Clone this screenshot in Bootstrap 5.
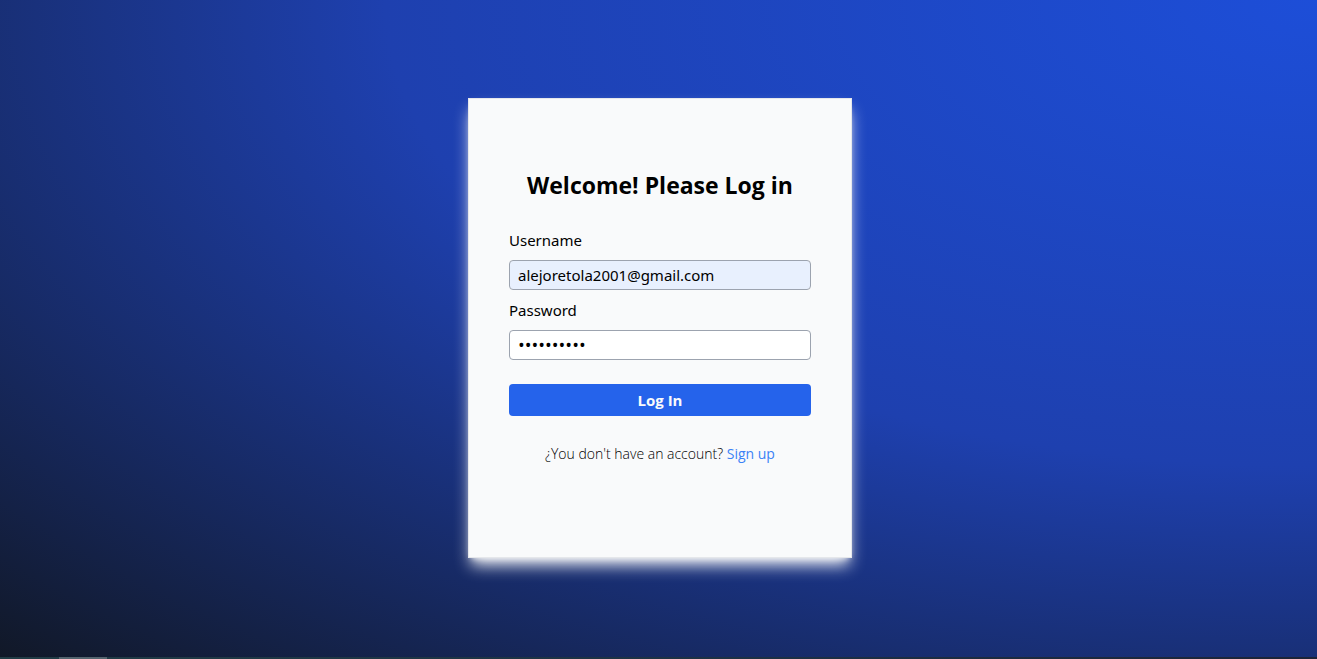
<!DOCTYPE html>
<html lang="en">
<head>
<meta charset="utf-8">
<meta name="viewport" content="width=device-width, initial-scale=1">
<title>Log in</title>
<link href="https://cdn.jsdelivr.net/npm/bootstrap@5.3.0/dist/css/bootstrap.min.css" rel="stylesheet">
<style>
  body {
    font-family: "Segoe UI", "Open Sans", "Noto Sans", sans-serif;
    font-size: 15px;
    line-height: 24px;
    color: #000;
    background: radial-gradient(at right top, #1d4ed8, #1e40af, #111827) #111827;
  }
  .login-area { padding: 0 0 2px 3px; }
  .login-card {
    width: 384px;
    max-width: 100%;
    min-height: 460px;
    padding: 70px 40px 40px;
    background: #f9fafb;
    border: 1px solid #e5e7eb;
    box-shadow: 0 10px 15px -3px #f3f4f6, 0 4px 6px -4px #f3f4f6;
  }
  .login-title { font-size: 23px; line-height: 32px; font-weight: 700; margin-bottom: 27px; }
  .login-card .form-label { font-family: "Segoe UI", "Noto Sans", sans-serif; margin-bottom: 8px; }
  .login-card .form-control {
    height: 30px;
    padding: 2px 8px;
    font-family: "Segoe UI", "Noto Sans", sans-serif;
    font-size: 15px;
    color: #000;
    border-color: #9ca3af;
    border-radius: 4px;
  }
  .login-card .filled { background-color: #e8f0fe; }
  .login-card .secret { font-family: "Segoe UI", "Open Sans", sans-serif; font-size: 18px; }
  .login-card .btn {
    height: 32px;
    padding: 4px;
    font-size: 15px;
    line-height: 24px;
    font-weight: 700;
    color: #f9fafb;
    background: #2563eb;
    border: 0;
    border-radius: 4px;
  }
  .signup-line { font-size: 14px; font-weight: 300; margin-top: 26px; }
  .signup-line a { color: #3b82f6; font-weight: 400; }
  .bottom-strip { height: 2px; background: linear-gradient(90deg, #213c45, #1d3044 60%, #1c2438); }
  .bottom-strip span { width: 48px; height: 2px; margin-left: 59px; background: #53646e; }
</style>
</head>
<body class="d-flex flex-column min-vh-100">
<main class="login-area flex-grow-1 d-flex align-items-center justify-content-center">
  <div class="login-card">
    <h1 class="login-title text-center">Welcome! Please Log in</h1>
    <form>
      <div class="mb-2">
        <label class="form-label d-block" for="username">Username</label>
        <input class="form-control filled" type="text" id="username" value="alejoretola2001@gmail.com">
      </div>
      <div class="mb-4">
        <label class="form-label d-block" for="password">Password</label>
        <input class="form-control secret" type="password" id="password" value="1234567890">
      </div>
      <button class="btn w-100 d-block" type="submit">Log In</button>
    </form>
    <p class="signup-line text-center mb-0">¿You don't have an account? <a class="text-decoration-none" href="#">Sign up</a></p>
  </div>
</main>
<div class="bottom-strip d-flex"><span></span></div>
<script src="https://cdn.jsdelivr.net/npm/bootstrap@5.3.0/dist/js/bootstrap.bundle.min.js"></script>
</body>
</html>
